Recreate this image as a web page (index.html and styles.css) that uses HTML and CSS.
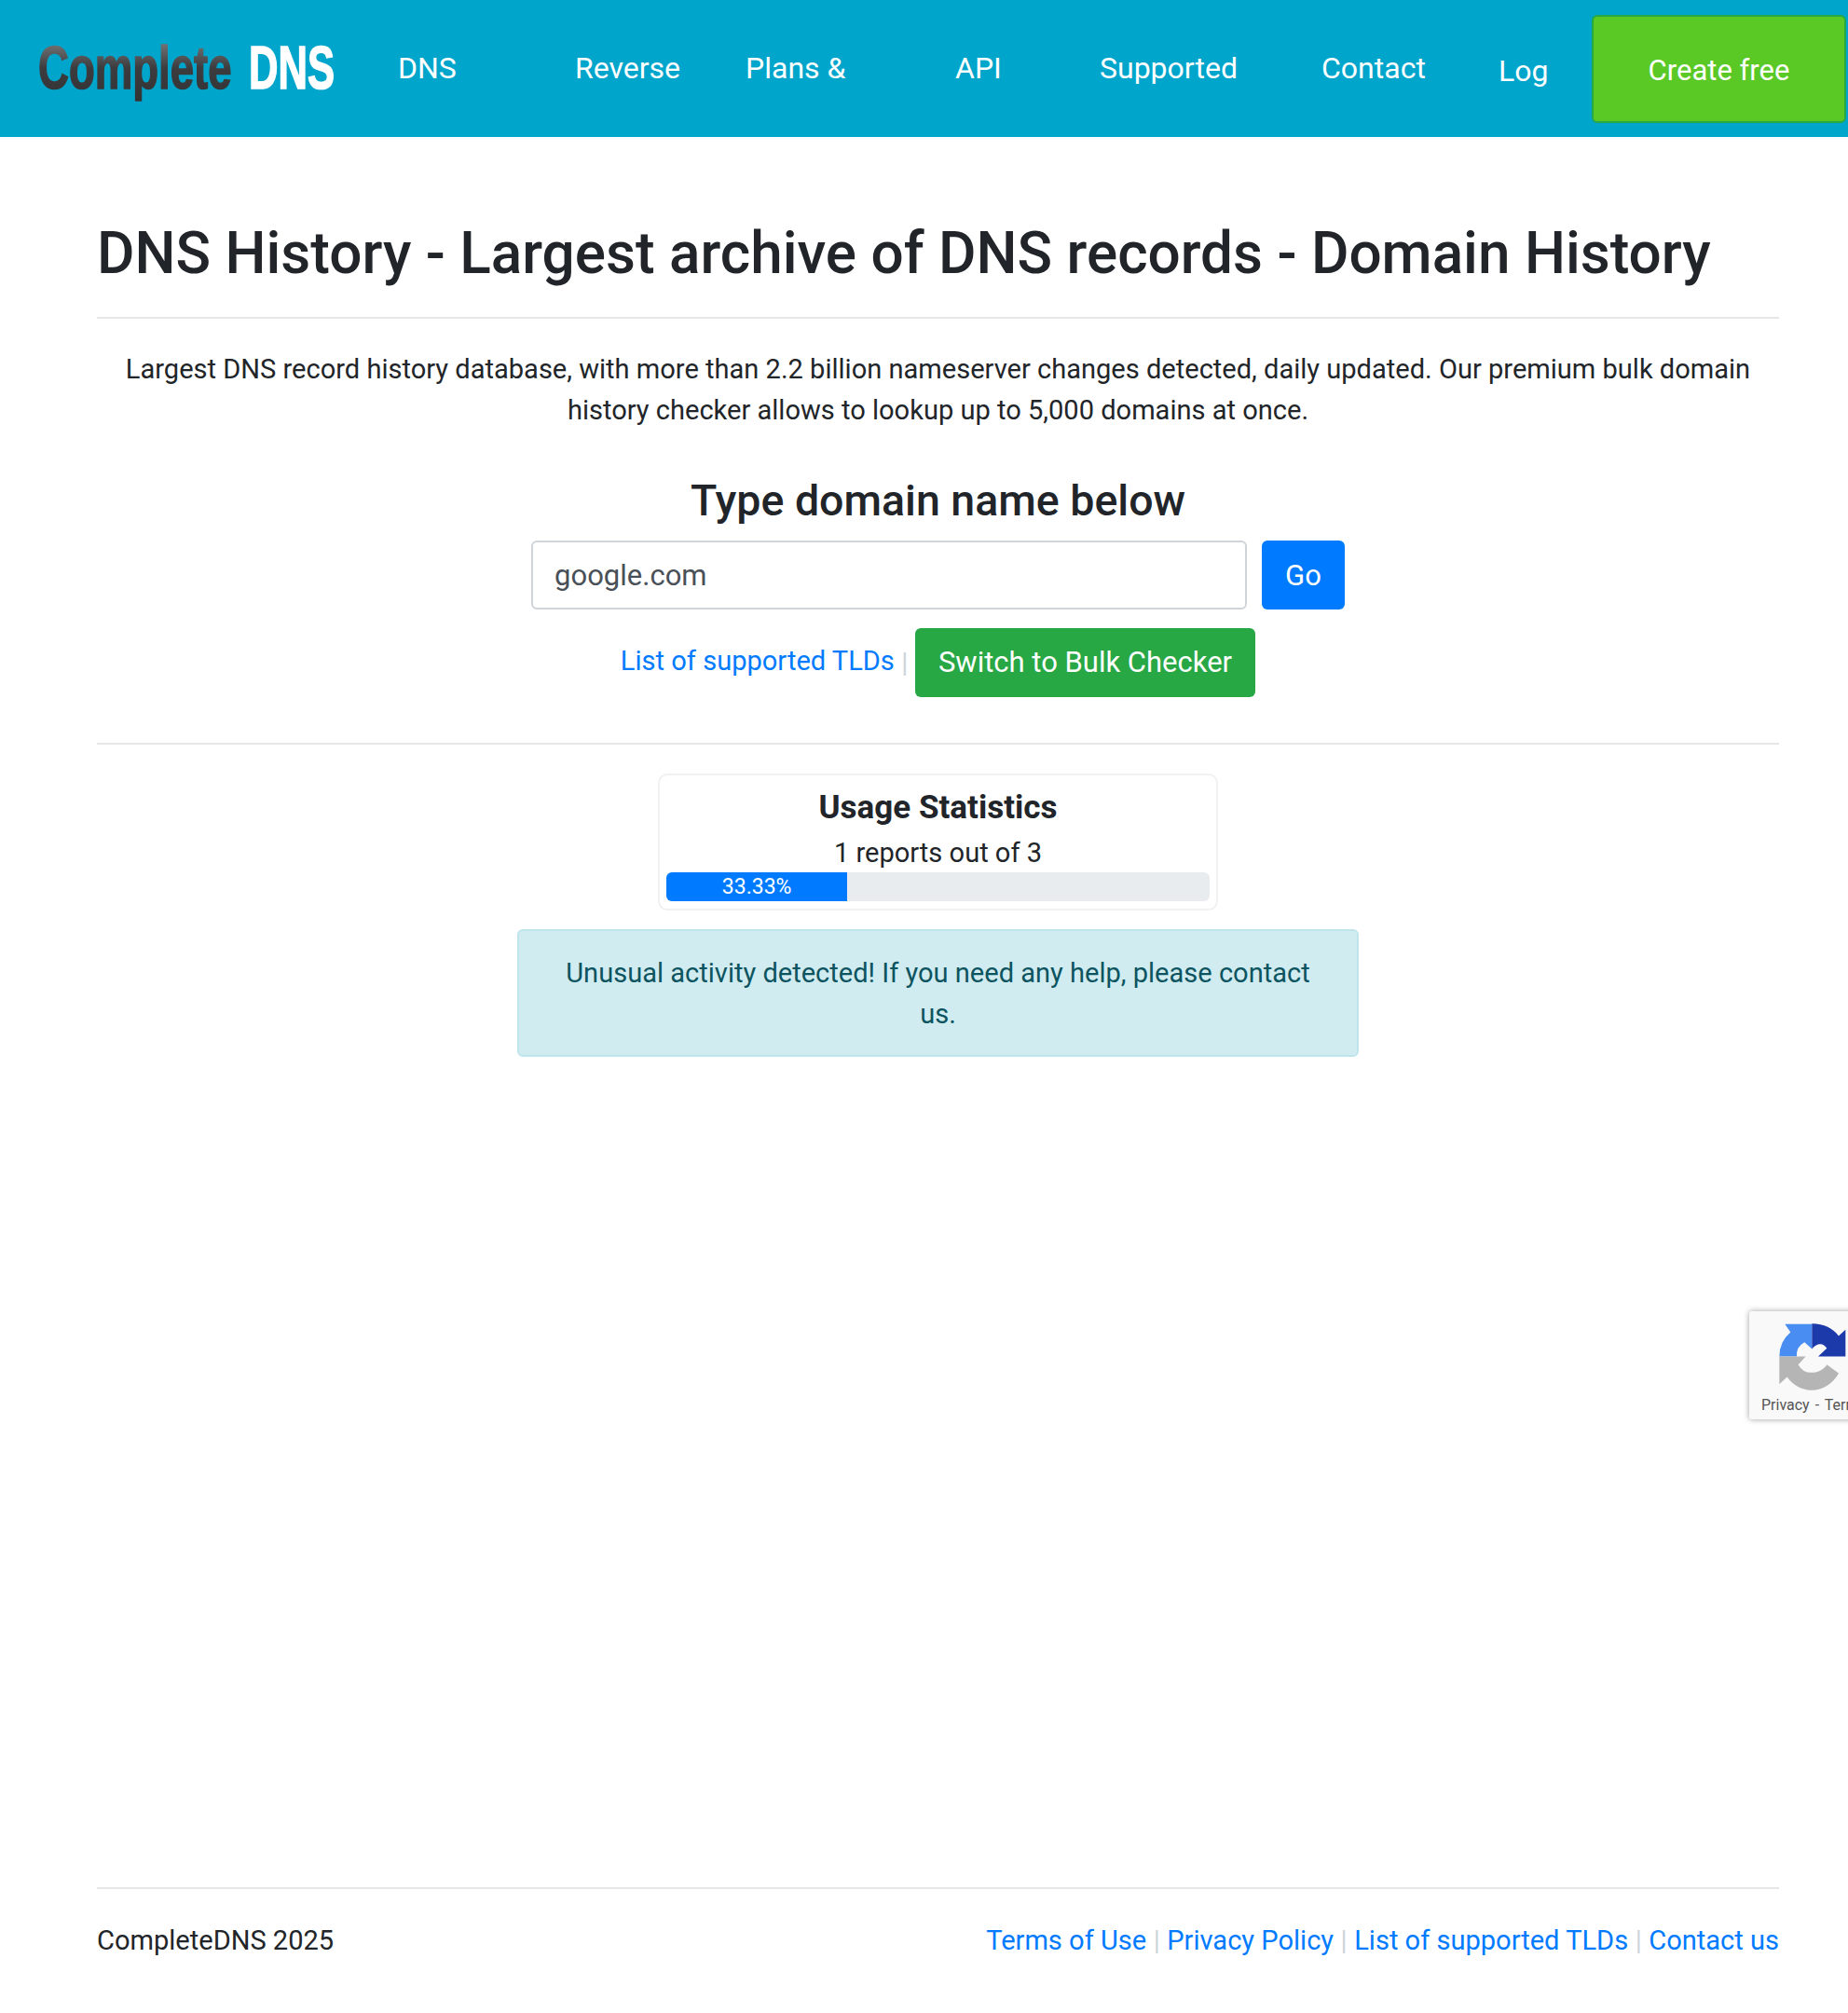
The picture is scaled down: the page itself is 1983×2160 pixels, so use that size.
FILE: index.html
```html
<!DOCTYPE html>
<html lang="en">
<head>
<meta charset="utf-8">
<title>DNS History - CompleteDNS</title>
<link rel="stylesheet" href="styles.css">
</head>
<body>
<header class="topbar">
  <a class="logo" href="#" aria-label="CompleteDNS">
    <span class="logo-cell logo-cell-dark"><span class="logo-word logo-dark">Complete</span></span>
    <span class="logo-cell"><span class="logo-word logo-light">DNS</span></span>
  </a>
  <nav class="nav">
    <a class="nav-link" href="#">DNS</a>
    <a class="nav-link" href="#">Reverse</a>
    <a class="nav-link" href="#">Plans &amp;</a>
    <a class="nav-link" href="#">API</a>
    <a class="nav-link" href="#">Supported</a>
    <a class="nav-link" href="#">Contact</a>
    <a class="nav-link nav-link-low" href="#">Log</a>
    <a class="nav-cta" href="#">Create free</a>
  </nav>
</header>

<div class="page">
  <main class="main">
    <h1 class="title">DNS History - Largest archive of DNS records - Domain History</h1>
    <p class="intro">Largest DNS record history database, with more than 2.2 billion nameserver changes detected, daily updated. Our premium bulk domain history checker allows to lookup up to 5,000 domains at once.</p>
    <h2 class="subtitle">Type domain name below</h2>
    <form class="search">
      <input class="search-input" type="text" value="google.com">
      <button class="btn btn-blue" type="button">Go</button>
    </form>
    <div class="links-row">
      <a class="link link-raised" href="#">List of supported TLDs</a><span class="sep link-raised">|</span><a class="btn btn-green" href="#">Switch to Bulk Checker</a>
    </div>
    <hr class="rule rule-mid">
    <section class="usage">
      <h3 class="usage-title">Usage Statistics</h3>
      <div class="usage-text">1 reports out of 3</div>
      <div class="progress"><div class="progress-bar" style="width:33.33%">33.33%</div></div>
    </section>
    <div class="alert">Unusual activity detected! If you need any help, please contact us.</div>
  </main>
  <footer class="footer">
    <span>CompleteDNS 2025</span>
    <span class="footer-links"><a class="link" href="#">Terms of Use</a><span class="sep">|</span><a class="link" href="#">Privacy Policy</a><span class="sep">|</span><a class="link" href="#">List of supported TLDs</a><span class="sep">|</span><a class="link" href="#">Contact us</a></span>
  </footer>
</div>

<div class="recaptcha">
  <svg class="recaptcha-icon" width="80" height="77" viewBox="140 90 240 230">
    <path fill="#4a8df2" d="M147 196A103 103 0 0 1 183 118L165 92H252V172L228 150A48 48 0 0 0 203 196Z"/>
    <path fill="#1c3aa9" d="M252 90C290 90 320 105 338 130L360 110V196H272L300 170C290 155 272 148 252 172Z"/>
    <path fill="#b5b5b5" d="M147 196H232L208 222A48 48 0 0 0 252 248C272 248 290 238 300 222L338 250A103 103 0 0 1 250 305A103 103 0 0 1 172 262L147 285Z"/>
  </svg>
  <div class="recaptcha-text">Privacy - Terms</div>
</div>
</body>
</html>
```
FILE: styles.css
```css
* { box-sizing: border-box; }
html, body { margin: 0; padding: 0; }
body {
  min-height: 100vh;
  display: flex;
  flex-direction: column;
  overflow-x: hidden;
  position: relative;
  background: #fff;
  color: #212529;
  font-family: Roboto, "Liberation Sans", sans-serif;
  font-size: 29.05px;
  line-height: 44px;
}
a { text-decoration: none; }

.topbar {
  height: 147px;
  background: #00a5cc;
  display: flex;
  align-items: flex-start;
  flex: none;
}
.logo { display: flex; width: 427px; padding: 36px 0 0 41px; flex: none; }
.logo-cell { display: block; width: 94px; height: 80px; }
.logo-cell-dark { width: 226px; }
.logo-word {
  display: inline-block;
  font-family: "Liberation Sans", sans-serif;
  font-weight: 700;
  font-size: 64px;
  line-height: 74px;
  white-space: nowrap;
  transform-origin: left center;
}
.logo-dark {
  transform: scaleX(0.712);
  background: linear-gradient(180deg, #7a7c7e 8%, #3c3c3e 50%, #333335 100%);
  -webkit-background-clip: text;
  background-clip: text;
  -webkit-text-fill-color: transparent;
  -webkit-text-stroke: 1.6px transparent;
}
.logo-light {
  transform: scaleX(0.681);
  color: #fff;
  -webkit-text-stroke: 1.6px #fff;
}

.nav {
  display: grid;
  grid-template-columns: 190px 183px 225px 155px 238px 190px 100px 273px;
  flex: none;
}
.nav-link { color: #fff; font-size: 32px; padding-top: 51px; line-height: 44px; white-space: nowrap; }
.nav-link-low { padding-top: 54px; }
.nav-cta {
  margin-top: 16px;
  height: 116px;
  padding-top: 4px;
  background: #5ac925;
  border: 2px solid #28a745;
  border-radius: 6px;
  color: #fff;
  font-size: 31px;
  display: flex;
  align-items: center;
  justify-content: center;
}

.page {
  flex: 1;
  display: flex;
  flex-direction: column;
  padding: 0 74px 0 104px;
}
.main { flex: 1; display: flex; flex-direction: column; align-items: center; }

.title {
  align-self: stretch;
  margin: 0;
  padding: 89px 0 32px;
  border-bottom: 2px solid #e6e7e8;
  font-size: 62.05px;
  font-weight: 500;
  line-height: 72px;
}
.intro { margin: 32px 0 0; text-align: center; width: 1780px; }
.subtitle { margin: 48px 0 0; font-size: 46.5px; font-weight: 500; line-height: 54px; }

.search { display: flex; margin-top: 16px; gap: 16px; }
.search-input {
  width: 768px;
  height: 74px;
  padding: 0 23px;
  border: 2px solid #ced4da;
  border-radius: 6px;
  color: #495057;
  font-family: inherit;
  font-size: 31px;
}
.btn {
  height: 74px;
  padding: 0 25px;
  border: 0;
  border-radius: 6px;
  color: #fff;
  font-family: inherit;
  font-size: 31px;
  display: inline-flex;
  align-items: center;
}
.btn-blue { background: #007bff; }
.btn-green { background: #28a745; padding: 0 25px; }

.links-row { display: flex; align-items: center; margin-top: 20px; }
.link { color: #007bff; }
.link-raised { margin-bottom: 4px; }
.sep { color: #ced4da; margin: 0 7.5px; }

.rule { border: 0; margin: 0; }
.rule-mid {
  align-self: stretch;
  margin-top: 49px;
  border-top: 2px solid #e6e7e8;
}

.usage {
  width: 601px;
  height: 147px;
  margin-top: 31px;
  padding: 0 7px;
  border: 2px solid #f0f1f2;
  border-radius: 10px;
  text-align: center;
}
.usage-title { margin: 13px 0 0; font-size: 35px; font-weight: 700; line-height: 44px; }
.usage-text { margin-top: 5px; line-height: 42px; }
.progress {
  height: 31px;
  background: #e9ecef;
  border-radius: 6px;
  overflow: hidden;
  text-align: center;
}
.progress-bar {
  height: 100%;
  background: #007bff;
  color: #fff;
  font-size: 23px;
  line-height: 31px;
}

.alert {
  width: 903px;
  height: 137px;
  margin-top: 20px;
  padding: 23px 40px;
  background: #d1ecf1;
  border: 2px solid #bee5eb;
  border-radius: 6px;
  color: #0c5460;
  text-align: center;
}

.footer {
  flex: none;
  display: flex;
  justify-content: space-between;
  height: 135px;
  padding-top: 33px;
  border-top: 2px solid #e6e7e8;
}

.recaptcha {
  position: absolute;
  left: 1877px;
  top: 1407px;
  width: 256px;
  height: 116px;
  background: #f9f9f9;
  border-radius: 3px;
  box-shadow: 0 0 6px rgba(0, 0, 0, 0.38);
  overflow: hidden;
}
.recaptcha-icon { display: block; margin: 13px 0 0 30px; }
.recaptcha-text { margin-left: 13px; font-family: Roboto, sans-serif; font-size: 16px; line-height: 22px; word-spacing: 2px; color: #555; white-space: nowrap; }
```
